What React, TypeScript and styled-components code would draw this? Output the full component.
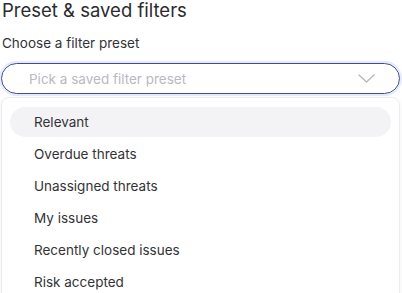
import React from "react";
import styled, { createGlobalStyle } from "styled-components";

const Global = createGlobalStyle`
  html, body { margin: 0; padding: 0; background: #ffffff; }
  body { font-family: Inter, "Noto Sans", sans-serif; -webkit-font-smoothing: antialiased; }
`;

const Page = styled.div`
  width: 402px;
  height: 293px;
  overflow: hidden;
  padding: 0 2px 0 1px;
  box-sizing: border-box;
  display: flex;
  flex-direction: column;
  & > * { flex-shrink: 0; }
`;

const Title = styled.h2`
  margin: 0;
  padding-left: 1px;
  font-size: 18.5px;
  line-height: 20px;
  font-weight: 400;
  color: #2b2b2e;
`;

const Label = styled.label`
  margin-top: 13px;
  padding-left: 1px;
  font-size: 13.5px;
  line-height: 20px;
  color: #333336;
`;

const SelectBox = styled.div`
  margin-top: 10px;
  height: 31px;
  border: 1.5px solid #3f4d8c;
  border-radius: 16px;
  box-shadow: 0 0 0 2px #e6eafb;
  display: flex;
  align-items: center;
  justify-content: space-between;
  padding: 0 24px 0 27px;
  box-sizing: border-box;
`;

const Placeholder = styled.span`
  font-size: 13.5px;
  color: #b9b9c0;
`;

const Menu = styled.ul`
  list-style: none;
  margin: 3px 0 0 0;
  padding: 9px 8px;
  border: 1px solid #ececef;
  border-radius: 8px;
  box-shadow: 0 2px 6px rgba(0, 0, 0, 0.06);
  display: flex;
  flex-direction: column;
  gap: 2px;
`;

const Item = styled.li<{ $active?: boolean }>`
  height: 30px;
  display: flex;
  align-items: center;
  padding-left: 24px;
  border-radius: 15px;
  font-size: 13.5px;
  color: #333336;
  background: ${(p) => (p.$active ? "#f3f3f6" : "transparent")};
`;

const items = [
  "Relevant",
  "Overdue threats",
  "Unassigned threats",
  "My issues",
  "Recently closed issues",
  "Risk accepted",
];

export default function App() {
  return (
    <>
      <Global />
      <Page>
        <Title>Preset &amp; saved filters</Title>
        <Label>Choose a filter preset</Label>
        <SelectBox>
          <Placeholder>Pick a saved filter preset</Placeholder>
          <svg width="17" height="9" viewBox="0 0 17 9" fill="none">
            <path d="M1 1l7.5 7 7.5-7" stroke="#b5b5bb" strokeWidth="1.3" strokeLinecap="round" strokeLinejoin="round" />
          </svg>
        </SelectBox>
        <Menu>
          {items.map((t, i) => (
            <Item key={t} $active={i === 0}>
              {t}
            </Item>
          ))}
        </Menu>
      </Page>
    </>
  );
}
